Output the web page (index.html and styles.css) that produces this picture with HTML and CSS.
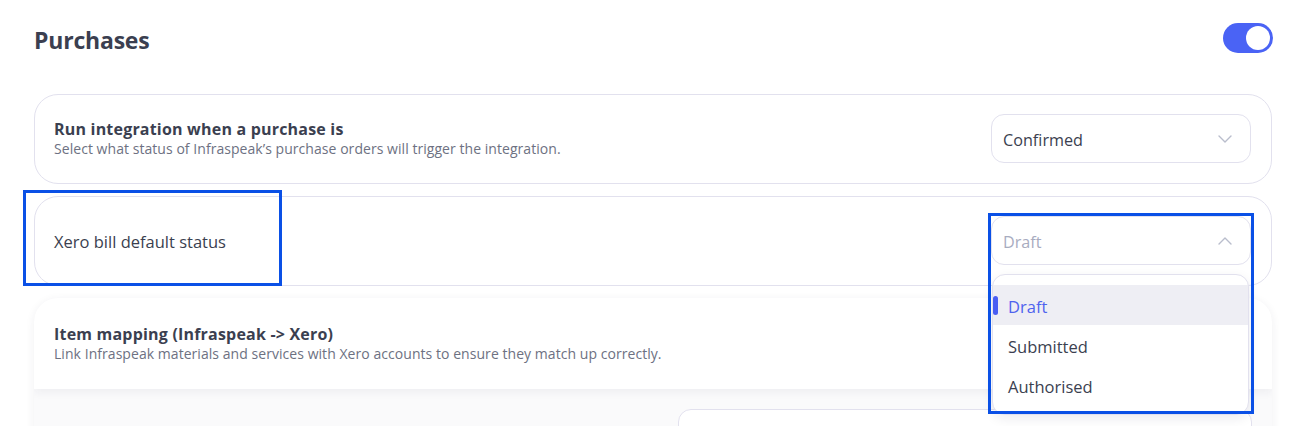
FILE: index.html
```html
<!DOCTYPE html>
<html>
<head>
<meta charset="utf-8">
<link rel="stylesheet" href="styles.css">
</head>
<body>
<div class="page">
  <div class="header">
    <h1 class="title">Purchases</h1>
    <div class="toggle"><span class="knob"></span></div>
  </div>

  <div class="cards">
    <div class="card">
      <div class="card-text">
        <div class="card-title">Run integration when a purchase is</div>
        <div class="card-sub">Select what status of Infraspeak’s purchase orders will trigger the integration.</div>
      </div>
      <div class="select">
        <span class="select-value">Confirmed</span>
        <svg class="chev" width="14" height="8" viewBox="0 0 14 8"><path d="M1 1 L7 7 L13 1" fill="none" stroke="#b9bdcc" stroke-width="1.4" stroke-linecap="round" stroke-linejoin="round"/></svg>
      </div>
    </div>

    <div class="card card-top">
      <div class="card-text">
        <div class="card-label">Xero bill default status</div>
      </div>
      <div class="select select-open">
        <span class="select-value placeholder">Draft</span>
        <svg class="chev" width="14" height="8" viewBox="0 0 14 8"><path d="M1 7 L7 1 L13 7" fill="none" stroke="#b9bdcc" stroke-width="1.4" stroke-linecap="round" stroke-linejoin="round"/></svg>
        <div class="menu">
          <div class="menu-item active">Draft</div>
          <div class="menu-item">Submitted</div>
          <div class="menu-item">Authorised</div>
        </div>
      </div>
      <div class="annot annot-left"></div>
      <div class="annot annot-right"></div>
    </div>

    <div class="card-map">
      <div class="map-head">
        <div class="card-title">Item mapping (Infraspeak -&gt; Xero)</div>
        <div class="card-sub">Link Infraspeak materials and services with Xero accounts to ensure they match up correctly.</div>
      </div>
      <div class="map-body">
        <div class="map-input"></div>
      </div>
    </div>
  </div>
</div>
</body>
</html>
```

FILE: styles.css
```css
* { box-sizing: border-box; }
body {
  margin: 0;
  background: #ffffff;
  font-family: "Open Sans", "Noto Sans", sans-serif;
  color: #3b3f50;
}
.page {
  height: 426px;
  overflow: hidden;
  padding: 23px 42px 0 34px;
}
.header {
  display: flex;
  justify-content: space-between;
  align-items: center;
  height: 30px;
  margin-right: -1px;
}
.title {
  margin: 0;
  font-size: 23px;
  font-weight: 700;
  color: #3b3f50;
  line-height: 30px;
  position: relative;
  top: 2px;
  letter-spacing: -0.2px;
}
.toggle {
  width: 50px;
  height: 30px;
  border-radius: 15px;
  background: #4a63f5;
  display: flex;
  align-items: center;
  justify-content: flex-end;
  padding-right: 3px;
}
.knob {
  width: 24px;
  height: 24px;
  border-radius: 50%;
  background: #ffffff;
}
.cards {
  margin-top: 41px;
  display: flex;
  flex-direction: column;
  gap: 12px;
}
.card {
  border: 1px solid #e2e1ee;
  border-radius: 24px;
  padding: 19px 20px 20px 19px;
  display: flex;
  align-items: center;
  justify-content: space-between;
  height: 90px;
  background: #fff;
}
.card-top {
  position: relative;
  z-index: 2;
  background: transparent;
}
.card-title {
  font-size: 16px;
  font-weight: 700;
  color: #3b3f50;
  line-height: 20px;
  letter-spacing: 0.2px;
}
.card-sub {
  font-size: 14px;
  color: #6d7182;
  line-height: 19px;
  letter-spacing: 0.05px;
}
.card-label {
  font-size: 16.5px;
  color: #3b3f50;
  position: relative;
  top: 1px;
}
.select {
  position: relative;
  width: 260px;
  height: 49px;
  border: 1px solid #e2e1ee;
  border-radius: 13px;
  display: flex;
  align-items: center;
  justify-content: space-between;
  padding: 0 18px 0 11px;
  background: #fff;
}
.select-value {
  font-size: 16.2px;
  color: #3b3f50;
  position: relative;
  top: 1px;
}
.select-value.placeholder {
  color: #a8acbf;
}
.menu {
  position: absolute;
  left: 0;
  right: 1px;
  top: calc(100% + 10px);
  background: #fff;
  border: 1px solid #e2e1ee;
  border-radius: 13px;
  box-shadow: 0 4px 12px rgba(30, 30, 60, 0.08);
  padding: 10px 0 9px;
}
.menu-item {
  position: relative;
  height: 40px;
  display: flex;
  align-items: center;
  padding-left: 15px;
  font-size: 16.5px;
  color: #3b3f50;
  padding-top: 2px;
}
.menu-item.active {
  background: #eeeef4;
  color: #4f63ee;
}
.menu-item.active::before {
  content: "";
  position: absolute;
  left: 0;
  top: 11px;
  width: 5px;
  height: 19px;
  border-radius: 3px;
  background: #4a5ef3;
}
.annot {
  position: absolute;
  border: 3px solid #0a50e6;
  pointer-events: none;
}
.annot-left {
  left: -12px;
  top: -7px;
  width: 259px;
  height: 96px;
}
.annot-right {
  left: 953px;
  top: 16px;
  width: 266px;
  height: 201px;
}
.card-map {
  border-radius: 24px 24px 0 0;
  background: #fafafb;
  box-shadow: 0 2px 10px rgba(40, 40, 70, 0.07);
  overflow: hidden;
}
.map-head {
  background: #ffffff;
  height: 91px;
  padding: 0 20px;
  display: flex;
  flex-direction: column;
  justify-content: center;
  box-shadow: 0 4px 8px rgba(40, 40, 70, 0.05);
  position: relative;
}
.map-body {
  display: flex;
  justify-content: flex-end;
  padding: 20px 20px 0 20px;
  height: 200px;
}
.map-input {
  width: 574px;
  height: 49px;
  border: 1px solid #e2e1ee;
  border-radius: 13px;
  background: #fff;
}
```
